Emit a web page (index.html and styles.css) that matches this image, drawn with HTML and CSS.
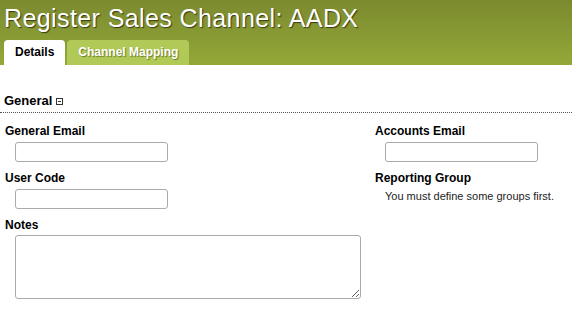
FILE: index.html
```html
<!DOCTYPE html>
<html lang="en">
<head>
    <meta charset="UTF-8">
    <title>Register Sales Channel</title>
    <link rel="stylesheet" href="styles.css">
</head>
<body>
    <div class="header">
        <h1>Register Sales Channel: AADX</h1>
        <div class="tabs">
            <span class="tab active">Details</span>
            <span class="tab">Channel Mapping</span>
        </div>
    </div>

    <div class="section">
        <h2>General <span class="toggle"></span></h2>
        <div class="fields">
            <div class="col left">
                <label>General Email</label>
                <input type="text">
                <label>User Code</label>
                <input type="text">
                <label>Notes</label>
                <textarea></textarea>
            </div>
            <div class="col right">
                <label>Accounts Email</label>
                <input type="text">
                <label>Reporting Group</label>
                <p class="note">You must define some groups first.</p>
            </div>
        </div>
    </div>
</body>
</html>
```

FILE: styles.css
```css
* {
    margin: 0;
    padding: 0;
    box-sizing: border-box;
}
body {
    background-color: #ffffff;
    font-family: "Liberation Sans", Arial, sans-serif;
    color: #000000;
}
.header {
    height: 65px;
    background: linear-gradient(to bottom, #7b8a2f, #93a838);
    padding: 4px 0 0 4px;
    display: flex;
    flex-direction: column;
    justify-content: space-between;
}
h1 {
    font-size: 25px;
    font-weight: normal;
    color: #ffffff;
    text-shadow: 1px 1px 1px #3a3a10;
    letter-spacing: 0.4px;
    line-height: 28px;
}
.tabs {
    display: flex;
    gap: 2px;
}
.tab {
    height: 25px;
    line-height: 25px;
    padding: 0 11px;
    font-size: 12px;
    font-weight: bold;
    color: #ffffff;
    background-color: #b0c957;
    border-radius: 4px 4px 0 0;
    text-shadow: 1px 1px 1px #6b7a2a;
}
.tab.active {
    background-color: #ffffff;
    color: #000000;
    text-shadow: none;
}
.section {
    padding-top: 28px;
}
h2 {
    font-size: 13px;
    font-weight: bold;
    padding: 0 0 4px 4px;
    border-bottom: 1px dotted #555555;
    display: flex;
    align-items: center;
    gap: 4px;
}
.toggle {
    width: 7px;
    height: 7px;
    border: 1px solid #333333;
    position: relative;
    margin-top: 1px;
}
.toggle::after {
    content: "";
    position: absolute;
    left: 1px;
    top: 2px;
    width: 3px;
    height: 1px;
    background-color: #333333;
}
.fields {
    display: grid;
    grid-template-columns: 370px 1fr;
    padding-top: 11px;
}
.col {
    display: flex;
    flex-direction: column;
    align-items: flex-start;
}
.left {
    padding-left: 5px;
}
.right {
    padding-left: 5px;
}
label {
    font-size: 12px;
    font-weight: bold;
    line-height: 14px;
    margin-bottom: 4px;
}
input, textarea {
    margin-left: 10px;
    width: 153px;
    height: 20px;
    border: 1px solid #aaaaaa;
    border-radius: 3px;
    margin-bottom: 9px;
    font-family: inherit;
}
textarea {
    width: 346px;
    height: 64px;
    margin-top: -1px;
    resize: both;
}
.note {
    font-size: 11px;
    margin-left: 10px;
    margin-top: 1px;
    color: #222222;
}
```
